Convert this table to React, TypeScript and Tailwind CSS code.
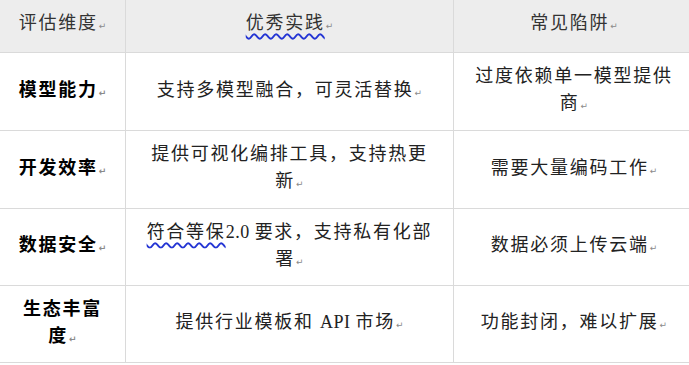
const CJK = "font-['Liberation_Serif','Noto_Sans_CJK_SC',serif]";

function Mark() {
  return (
    <span className="ml-[1px] inline-block align-baseline font-['DejaVu_Sans',sans-serif] text-[9px] tracking-normal text-[#8a8a8a]">
      ↵
    </span>
  );
}

function Wavy({ children }: { children: React.ReactNode }) {
  return (
    <span className="underline decoration-wavy decoration-[#2435d4] decoration-[1.5px] underline-offset-[4px]">
      {children}
    </span>
  );
}

function Latin({ children }: { children: React.ReactNode }) {
  return <span className="text-[18px] tracking-[0.5px]">{children}</span>;
}

type Row = {
  h: string;
  dim: React.ReactNode;
  good: React.ReactNode;
  bad: React.ReactNode;
};

const ROWS: Row[] = [
  {
    h: "h-[78px]",
    dim: (
      <>
        模型能力
        <Mark />
      </>
    ),
    good: (
      <>
        支持多模型融合，可灵活替换
        <Mark />
      </>
    ),
    bad: (
      <>
        过度依赖单一模型提供
        <br />
        商
        <Mark />
      </>
    ),
  },
  {
    h: "h-[78px]",
    dim: (
      <>
        开发效率
        <Mark />
      </>
    ),
    good: (
      <>
        提供可视化编排工具，支持热更
        <br />
        新
        <Mark />
      </>
    ),
    bad: (
      <>
        需要大量编码工作
        <Mark />
      </>
    ),
  },
  {
    h: "h-[77px]",
    dim: (
      <>
        数据安全
        <Mark />
      </>
    ),
    good: (
      <>
        <Wavy>符合等保</Wavy>
        <Latin>2.0 </Latin>要求，支持私有化部
        <br />
        署
        <Mark />
      </>
    ),
    bad: (
      <>
        数据必须上传云端
        <Mark />
      </>
    ),
  },
  {
    h: "h-[77px]",
    dim: (
      <>
        生态丰富
        <br />
        度
        <Mark />
      </>
    ),
    good: (
      <>
        提供行业模板和 <Latin>API </Latin>市场
        <Mark />
      </>
    ),
    bad: (
      <>
        功能封闭，难以扩展
        <Mark />
      </>
    ),
  },
];

export default function App() {
  const cell = "flex items-center justify-center text-center whitespace-nowrap leading-[27px]";
  return (
    <div className={`h-[365px] w-[689px] overflow-hidden bg-white ${CJK} text-[18px] tracking-[1.75px] text-[#222]`}>
      <div className="grid w-[694px] grid-cols-[126px_328px_240px]">
        <div className={`${cell} h-[53px] border-r border-b border-[#dadada] bg-[#ededed] pb-[2px] text-[#333]`}>
          <span>
            评估维度
            <Mark />
          </span>
        </div>
        <div className={`${cell} h-[53px] border-r border-b border-[#dadada] bg-[#ededed] pb-[2px] text-[#333]`}>
          <span>
            <Wavy>优秀实践</Wavy>
            <Mark />
          </span>
        </div>
        <div className={`${cell} h-[53px] border-b border-[#dadada] bg-[#ededed] pb-[2px] text-[#333]`}>
          <span>
            常见陷阱
            <Mark />
          </span>
        </div>

        {ROWS.map((row, i) => (
          <div key={i} className="contents">
            <div className={`${cell} ${row.h} border-r border-b border-[#dadada] font-bold text-black`}>
              <span>{row.dim}</span>
            </div>
            <div className={`${cell} ${row.h} border-r border-b border-[#dadada]`}>
              <span>{row.good}</span>
            </div>
            <div className={`${cell} ${row.h} border-b border-[#dadada]`}>
              <span>{row.bad}</span>
            </div>
          </div>
        ))}
      </div>
    </div>
  );
}
